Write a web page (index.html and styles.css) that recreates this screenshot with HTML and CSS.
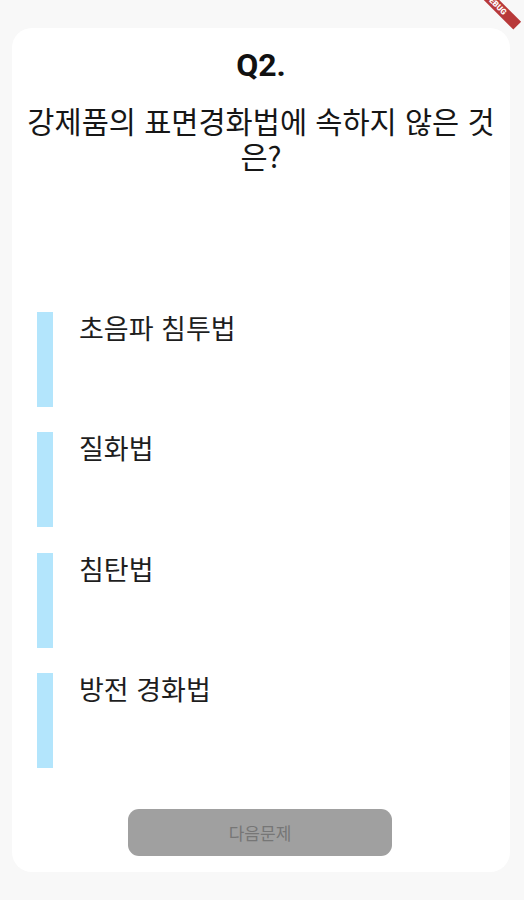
FILE: index.html
```html
<!DOCTYPE html>
<html lang="ko">
<head>
<meta charset="utf-8">
<title>Quiz</title>
<link rel="stylesheet" href="styles.css">
</head>
<body>
<div class="card">
  <h1 class="qnum">Q2.</h1>
  <p class="question">강제품의 표면경화법에 속하지 않은 것은?</p>
  <ul class="options">
    <li class="option"><span class="bar"></span><span class="label">초음파 침투법</span></li>
    <li class="option"><span class="bar"></span><span class="label">질화법</span></li>
    <li class="option"><span class="bar"></span><span class="label">침탄법</span></li>
    <li class="option"><span class="bar"></span><span class="label">방전 경화법</span></li>
  </ul>
  <button class="next" disabled>다음문제</button>
</div>
<div class="banner-clip"><div class="banner">DEBUG</div></div>
</body>
</html>
```
FILE: styles.css
```css
html, body {
  margin: 0;
  padding: 0;
  overflow: hidden;
}
body {
  background: #f8f8f8;
  width: 524px;
  height: 900px;
  padding-top: 28px;
  box-sizing: border-box;
  font-family: "Noto Sans CJK KR", "Noto Sans", sans-serif;
  color: #1a1a1a;
}
.card {
  margin-left: 12px;
  width: 498px;
  box-sizing: border-box;
  background: #ffffff;
  border-radius: 20px;
  padding: 19px 10px 16px;
  display: flex;
  flex-direction: column;
  align-items: stretch;
}
.qnum {
  margin: 0;
  font-family: Roboto, "Noto Sans", sans-serif;
  font-weight: 700;
  font-size: 32px;
  line-height: 37.5px;
  text-align: center;
  color: #111;
}
.question {
  margin: 18px 0 0;
  font-size: 29.5px;
  line-height: 35px;
  text-align: center;
  color: #161616;
}
.options {
  list-style: none;
  margin: 139px 0 0;
  padding: 0 0 0 15px;
  display: flex;
  flex-direction: column;
  gap: 25.5px;
}
.option {
  display: flex;
  height: 95px;
  gap: 26px;
}
.bar {
  width: 16px;
  height: 100%;
  background: #b3e5fc;
  flex: none;
}
.label {
  font-size: 27px;
  line-height: 32px;
  color: #1e1e1e;
}
.next {
  align-self: center;
  margin: 41px 0 0 -2px;
  width: 264px;
  height: 47px;
  border: none;
  border-radius: 11px;
  background: #a0a0a0;
  color: #767676;
  font-family: "Noto Sans CJK KR", "Noto Sans", sans-serif;
  font-size: 17px;
  padding: 0;
}
.banner-clip {
  position: absolute;
  top: 0;
  right: 0;
  width: 70px;
  height: 50px;
  overflow: hidden;
}
.banner {
  position: absolute;
  left: 12px;
  top: -1px;
  width: 60px;
  height: 11px;
  background: #b8393a;
  color: #fff;
  font-family: Roboto, sans-serif;
  font-weight: 900;
  font-size: 8px;
  line-height: 11px;
  text-align: center;
  transform: rotate(45deg);
}
```
